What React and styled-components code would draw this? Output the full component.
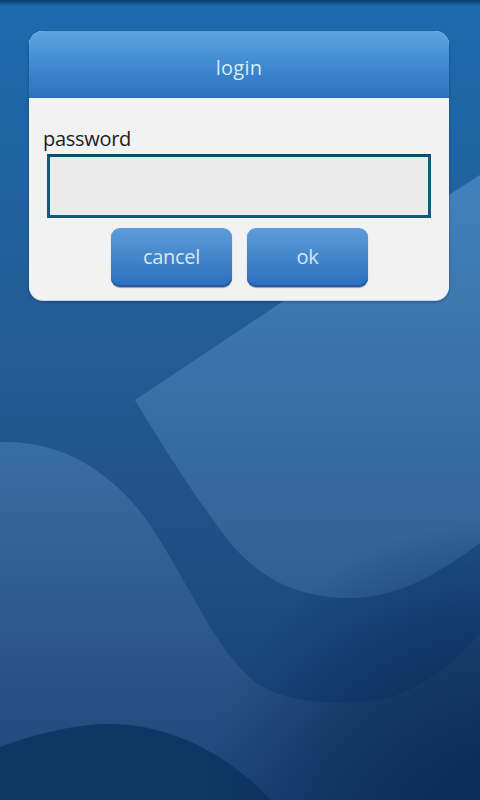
import React from "react";
import styled, { createGlobalStyle } from "styled-components";

const GlobalStyle = createGlobalStyle`
  html, body {
    margin: 0;
    padding: 0;
    background: #0f3a6b;
  }
  body {
    font-family: "Open Sans", "DejaVu Sans", sans-serif;
  }
`;

const Screen = styled.div`
  position: relative;
  width: 480px;
  height: 800px;
  overflow: hidden;
`;

const Wallpaper = styled.svg`
  position: absolute;
  top: 0;
  left: 0;
  z-index: 0;
`;

const Content = styled.div`
  position: relative;
  z-index: 1;
  padding: 31px 31px 0 29px;
`;

const Dialog = styled.div`
  width: 420px;
  border-radius: 14px;
  overflow: hidden;
  background: #f2f2f2;
  box-shadow: 0 1px 0 #c9d6e2, 0 2px 3px rgba(0, 20, 60, 0.35);
`;

const Header = styled.div`
  height: 67px;
  display: flex;
  align-items: center;
  justify-content: center;
  background: linear-gradient(#5aa6e1 0%, #3d88cf 55%, #2b73bf 100%);
  border-bottom: 1px solid #2a6cb3;
  box-sizing: border-box;
  color: #d9e9f6;
  font-size: 20px;
  font-weight: 500;
  letter-spacing: 0.2px;
  padding-top: 7px;
`;

const Body = styled.div`
  padding: 29px 18px 13px 18px;
  display: flex;
  flex-direction: column;
`;

const Label = styled.label`
  font-size: 20px;
  font-weight: 500;
  line-height: 24px;
  color: #1c1c1c;
  margin-left: -4px;
  letter-spacing: -0.3px;
`;

const Input = styled.input`
  margin-top: 3px;
  height: 64px;
  box-sizing: border-box;
  border: 3px solid #14587c;
  border-top-color: #0f4c6c;
  background: #ebebeb;
  outline: none;
  font-size: 20px;
  padding: 0 10px;
`;

const Buttons = styled.div`
  margin-top: 10px;
  display: flex;
  justify-content: center;
  gap: 15px;
  padding-left: 1px;
`;

const Button = styled.button`
  width: 121px;
  height: 59px;
  border: none;
  border-radius: 9px;
  background: linear-gradient(#5d9cd9 0%, #4588cb 45%, #2d6ebd 100%);
  box-shadow: inset 0 -2px 0 #245aa0, 0 1px 1px rgba(0, 0, 0, 0.35);
  color: #d8e6f2;
  font-family: "Open Sans", "DejaVu Sans", sans-serif;
  font-size: 20px;
  font-weight: 500;
  letter-spacing: -0.3px;
  padding: 0 0 2px 0;
  cursor: pointer;
`;

const Background = () => (
  <Wallpaper width="480" height="800" viewBox="0 0 480 800">
    <defs>
      <linearGradient id="base" x1="0" y1="0" x2="0" y2="1">
        <stop offset="0" stopColor="#1b6bae" />
        <stop offset="0.45" stopColor="#245b93" />
        <stop offset="1" stopColor="#163f70" />
      </linearGradient>
      <linearGradient id="right" x1="0" y1="0" x2="0" y2="1">
        <stop offset="0" stopColor="#4282bc" />
        <stop offset="1" stopColor="#305f92" />
      </linearGradient>
      <linearGradient id="left" x1="0" y1="0" x2="0" y2="1">
        <stop offset="0" stopColor="#396ea3" />
        <stop offset="0.6" stopColor="#2b5586" />
        <stop offset="1" stopColor="#1d4679" />
      </linearGradient>
      <radialGradient
        id="corner"
        gradientUnits="userSpaceOnUse"
        cx="500"
        cy="820"
        r="300"
      >
        <stop offset="0" stopColor="#072855" stopOpacity="0.95" />
        <stop offset="0.55" stopColor="#072855" stopOpacity="0.6" />
        <stop offset="1" stopColor="#072855" stopOpacity="0" />
      </radialGradient>
      <linearGradient id="top" x1="0" y1="0" x2="0" y2="1">
        <stop offset="0" stopColor="#0d3a6a" />
        <stop offset="1" stopColor="#0d3a6a" stopOpacity="0" />
      </linearGradient>
    </defs>
    <rect width="480" height="800" fill="url(#base)" />
    <path
      d="M135 400 L300 290 L480 175 L480 543 C440 572 400 598 350 598 C300 598 262 580 232 545 C200 505 162 445 135 400 Z"
      fill="url(#right)"
    />
    <path
      d="M0 442 C60 440 112 470 150 525 C190 585 215 650 255 682 C290 705 330 703 360 702 C410 700 450 668 480 633 L480 800 L0 800 Z"
      fill="url(#left)"
    />
    <path
      d="M0 747 C40 732 80 724 110 724 C170 724 230 755 270 800 L0 800 Z"
      fill="#0e3766"
    />
    <rect width="480" height="800" fill="url(#corner)" />
    <rect width="480" height="6" fill="url(#top)" />
  </Wallpaper>
);

const App = () => (
  <Screen>
    <GlobalStyle />
    <Background />
    <Content>
      <Dialog>
        <Header>login</Header>
        <Body>
          <Label htmlFor="pw">password</Label>
          <Input id="pw" type="password" />
          <Buttons>
            <Button>cancel</Button>
            <Button>ok</Button>
          </Buttons>
        </Body>
      </Dialog>
    </Content>
  </Screen>
);

export default App;
